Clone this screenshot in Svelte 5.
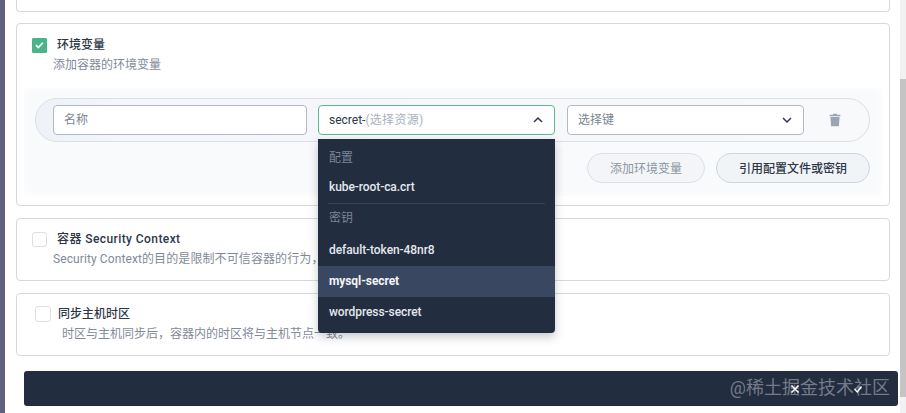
<script lang="ts">
	const configs = ['kube-root-ca.crt'];
	const secrets = ['default-token-48nr8', 'mysql-secret', 'wordpress-secret'];
</script>

<div class="page">
	<div class="rail"></div>
	<main class="content">
		<section class="card stub"></section>

		<section class="card env">
			<div class="head">
				<span class="check on">
					<svg viewBox="0 0 16 16" width="16" height="16"><path d="M3.6 8.2l3 3 5.6-6" fill="none" stroke="#fff" stroke-width="2"/></svg>
				</span>
				<span class="title">环境变量</span>
			</div>
			<p class="desc">添加容器的环境变量</p>

			<div class="panel">
				<div class="row">
					<div class="field name"><span class="label">名称</span></div>
					<div class="field source">
						<span class="label"><span class="value">secret-</span><span class="hint">(选择资源)</span></span>
						<svg viewBox="0 0 12 12" width="12" height="12"><path d="M2 8l4-4 4 4" fill="none" stroke="#2d3748" stroke-width="1.5"/></svg>

						<div class="menu">
							<div class="group">配置</div>
							{#each configs as item (item)}
								<div class="item">{item}</div>
							{/each}
							<div class="divider"></div>
							<div class="group second">密钥</div>
							{#each secrets as item (item)}
								<div class="item" class:active={item === 'mysql-secret'}>{item}</div>
							{/each}
						</div>
					</div>
					<div class="field key">
						<span class="label">选择键</span>
						<svg viewBox="0 0 12 12" width="12" height="12"><path d="M2 4l4 4 4-4" fill="none" stroke="#2d3748" stroke-width="1.5"/></svg>
					</div>
					<svg class="trash" viewBox="0 0 12 14" width="12" height="14">
						<path d="M4.4 0.8h3.2l.5 1H11.4v1.5H.6V1.8h3.3zM1.4 4h9.2l-.7 9.2H2.1z" fill="#9aa5b1"/>
					</svg>
				</div>
				<div class="actions">
					<button class="pill muted">添加环境变量</button>
					<button class="pill strong">引用配置文件或密钥</button>
				</div>
			</div>
		</section>

		<section class="card plain sc">
			<div class="head">
				<span class="check"></span>
				<span class="title">容器 Security Context</span>
			</div>
			<p class="desc">Security Context的目的是限制不可信容器的行为，</p>
		</section>

		<section class="card plain tz">
			<div class="head">
				<span class="check"></span>
				<span class="title">同步主机时区</span>
			</div>
			<p class="desc">时区与主机同步后，容器内的时区将与主机节点一致。</p>
		</section>

		<footer class="bar">
			<svg viewBox="0 0 12 12" width="12" height="12"><path d="M2.5 2.5l7 7M9.5 2.5l-7 7" stroke="#fff" stroke-width="1.5"/></svg>
			<svg viewBox="0 0 12 12" width="12" height="12"><path d="M2.5 6l2.8 3L9.5 3.5" fill="none" stroke="#fff" stroke-width="1.4"/></svg>
			<span class="watermark">@稀土掘金技术社区</span>
		</footer>
	</main>
	<div class="scrollbar"><div class="thumb"></div></div>
</div>

<style>
	:global(body) {
		margin: 0;
		background: #fff;
		overflow: hidden;
	}

	.page {
		display: flex;
		width: 906px;
		height: 413px;
		overflow: hidden;
		font-family: Roboto, "Noto Sans CJK SC", sans-serif;
		font-size: 12px;
		color: #2d3748;
	}

	.rail {
		width: 5px;
		background: #5f6180;
		flex-shrink: 0;
	}

	.content {
		flex: 1;
		min-width: 0;
		padding: 0 10px 0 11px;
		display: flex;
		flex-direction: column;
	}

	.card {
		border: 1px solid #d8d8d8;
		border-radius: 4px;
		box-sizing: border-box;
		flex-shrink: 0;
	}

	.stub {
		height: 12px;
		border-top: none;
		border-radius: 0 0 4px 4px;
		margin-bottom: 11px;
	}

	.env {
		height: 183px;
		margin-bottom: 12px;
		padding: 13px 7px 0;
	}

	.plain {
		height: 63px;
		margin-bottom: 12px;
		padding: 12px 15px 0;
	}

	.head {
		display: flex;
		align-items: center;
		gap: 10px;
		height: 16px;
	}

	.env .head {
		padding-left: 8px;
	}

	.check {
		width: 15px;
		height: 15px;
		border: 1px solid #dcdfe4;
		border-radius: 3px;
		box-sizing: border-box;
		background: #fff;
		display: flex;
		align-items: center;
		justify-content: center;
	}

	.check.on {
		background: #48b68a;
		border-color: #48b68a;
		border-radius: 1px;
	}

	.title {
		font-weight: 500;
		line-height: 16px;
	}

	.desc {
		margin: 4px 0 0 21px;
		line-height: 16px;
		color: #7f8a99;
		white-space: nowrap;
	}

	.sc .title {
		letter-spacing: 0.42px;
	}

	.sc .desc {
		letter-spacing: 0.1px;
	}

	.env .desc {
		margin-left: 29px;
	}

	.tz .head {
		padding-left: 3px;
		gap: 7px;
	}

	.tz .check {
		width: 16px;
		height: 16px;
	}

	.tz .desc {
		margin-left: 30px;
	}

	.panel {
		margin-top: 15px;
		height: 108px;
		box-sizing: border-box;
		padding: 10px 12px 0 11px;
		background: #f8fafc;
		box-shadow: inset 0 0 10px #fff;
	}

	.row {
		display: flex;
		align-items: center;
		height: 44px;
		box-sizing: border-box;
		padding-left: 17px;
		border: 1px solid #dbe0e6;
		border-radius: 22px;
		background: linear-gradient(90deg, #eef2f6, #f4f6f9 10%, #f7f9fb);
	}

	.field {
		height: 30px;
		box-sizing: border-box;
		border: 1px solid #b4bac2;
		border-radius: 4px;
		background: #fff;
		padding: 0 10px;
		display: flex;
		align-items: center;
		justify-content: space-between;
		color: #7a8492;
		flex-shrink: 0;
	}

	.label {
		line-height: 16px;
		margin-top: -1px;
	}

	.name {
		width: 254px;
		margin-right: 11px;
	}

	.source {
		width: 237px;
		margin-right: 12px;
		border-color: #5cb794;
		position: relative;
	}

	.key {
		width: 237px;
	}

	.value {
		color: #2d3748;
	}

	.hint {
		color: #a9b1bc;
		letter-spacing: 0.3px;
	}

	.trash {
		margin-left: 25px;
		margin-top: -1px;
	}

	.menu {
		position: absolute;
		top: 33px;
		left: -1px;
		width: 237px;
		height: 194px;
		box-sizing: border-box;
		padding-top: 6px;
		background: #222d40;
		border-radius: 0 0 4px 4px;
		box-shadow: 0 4px 10px rgba(30, 40, 60, 0.25);
		z-index: 2;
	}

	.group {
		height: 27px;
		line-height: 26px;
		padding-left: 11px;
		color: #7b8596;
	}

	.group.second {
		height: 31px;
		line-height: 29px;
	}

	.item {
		height: 31px;
		line-height: 31px;
		padding-left: 11px;
		color: #e4e8ee;
		font-weight: 500;
		letter-spacing: -0.08px;
	}

	.item.active {
		background: #3a4760;
		font-weight: 700;
		color: #f2f4f7;
	}

	.divider {
		height: 1px;
		margin: 0 10px;
		background: #37425a;
	}

	.actions {
		display: flex;
		justify-content: flex-end;
		gap: 11px;
		margin-top: 11px;
	}

	.pill {
		height: 30px;
		border-radius: 15px;
		font: inherit;
		padding: 0 0 2px;
		border: 1px solid #dbe0e6;
		background: #f1f4f7;
	}

	.pill.muted {
		width: 118px;
		color: #8b95a3;
		background: #f3f5f8;
	}

	.pill.strong {
		width: 154px;
		color: #2d3748;
		font-weight: 500;
		border-color: #cfd5dc;
	}

	.bar {
		position: relative;
		height: 35px;
		margin: 3px -8px 0 8px;
		flex-shrink: 0;
		background: #222d40;
		border-radius: 3px;
		display: flex;
		align-items: center;
		justify-content: flex-end;
		gap: 51px;
		padding-right: 34px;
	}

	.watermark {
		position: absolute;
		right: 8px;
		top: 4px;
		font-size: 18px;
		line-height: 26px;
		color: rgba(255, 255, 255, 0.38);
		white-space: nowrap;
	}

	.scrollbar {
		width: 6px;
		flex-shrink: 0;
		background: #f1f1f1;
		padding-top: 79px;
		box-sizing: border-box;
	}

	.thumb {
		height: 318px;
		background: #c4c4c4;
	}
</style>
